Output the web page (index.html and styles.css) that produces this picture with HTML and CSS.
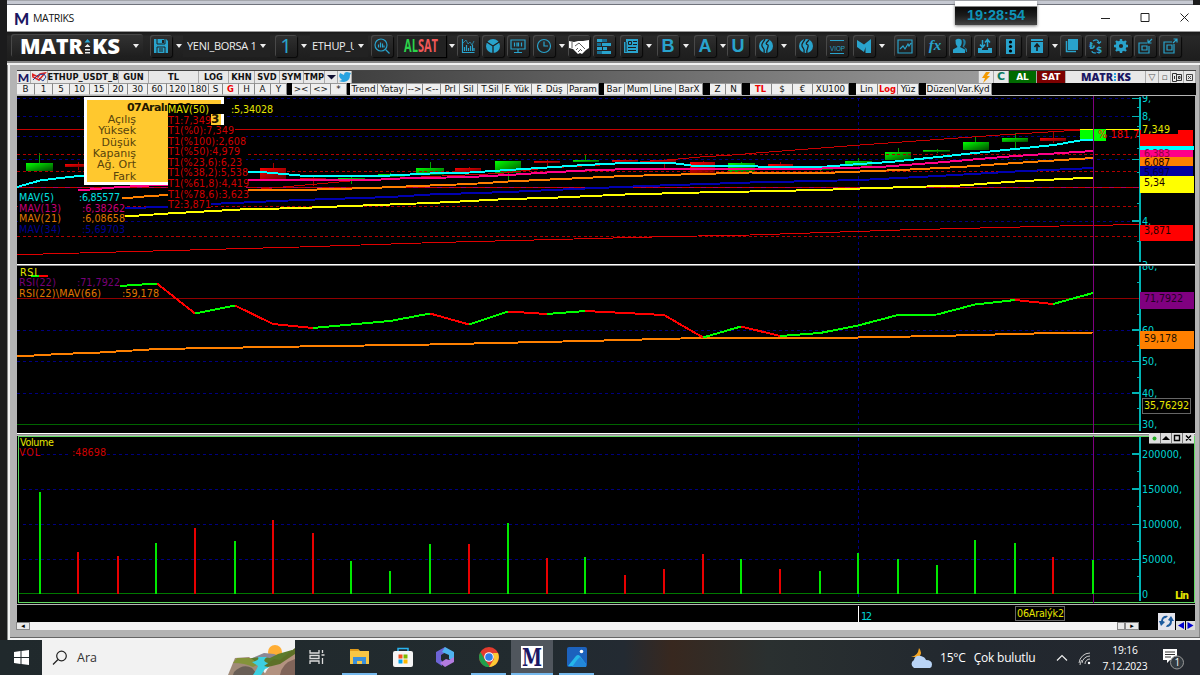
FILE: index.html
```html
<!DOCTYPE html>
<html lang="tr">
<head>
    <meta charset="UTF-8">
    <title>MATRIKS</title>
    <link rel="stylesheet" href="styles.css">
</head>
<body>
<div class="app">
    <div class="clock">19:28:54</div>
    <header class="titlebar">
        <span class="m-logo">M</span>
        <span class="title">MATRIKS</span>
        <svg class="win-btns" width="100" height="26" viewBox="0 0 100 26"><path d="M5 13.500h9M45 8.500h8v8h-8zM84.500 8.500l8 8M92.500 8.500l-8 8" fill="none" stroke="#222"/></svg>
    </header>

    <nav class="toolbar">
        <div class="tool brand">
            <svg width="106" height="22" viewBox="0 0 106 22"><text x="5" y="19" class="logo-text" textLength="63" lengthAdjust="spacingAndGlyphs">MATR</text><text x="77" y="19" class="logo-text" textLength="28" lengthAdjust="spacingAndGlyphs">KS</text><path d="M72.500 4l3 3.500h-6z" fill="#29a9d8"/><path d="M72.500 9l3 3h-6zM70 14h5v1.500h-5zM70 17h5v1.500h-5z" fill="#eee"/></svg>
            <i class="caret"></i>
        </div>
        <div class="tool"><svg class="btn" viewBox="0 0 22 22"><path d="M4 4h12l2 2v12h-14z" fill="#29a3cc"/><path d="M7 4v5h8v-5M7 18v-6h8v6M9 14h4M9 16h4" stroke="#202020" fill="none"/><path d="M12 5h2v3h-2z" fill="#202020"/></svg><i class="caret"></i></div>
        <div class="tool select"><span>YENI_BORSA 1.</span><i class="caret"></i></div>
        <div class="tool"><b class="btn letter thin">1</b><i class="caret"></i></div>
        <div class="tool select small"><span>ETHUP_U</span><i class="caret"></i></div>
        <div class="tool"><svg class="btn line" viewBox="0 0 22 22"><circle cx="10" cy="10" r="6"/><path d="M14.500 14.500l4 4M7.500 12.500v-3M9.500 12.500v-5M11.500 12.500v-4M13 12.500v-2"/></svg></div>
        <div class="tool alsat"><svg width="49" height="22" viewBox="0 0 49 22"><text x="7" y="17" textLength="34" lengthAdjust="spacingAndGlyphs"><tspan class="al">AL</tspan>SAT</text></svg><i class="caret"></i></div>
        <div class="tool"><svg class="btn line" viewBox="0 0 22 22"><path d="M5.500 4v13.500h12M7.500 16v-4M9.500 16v-6M11.500 16v-3M13.500 16v-5M15.500 16v-6M17 16v-3"/><path d="M6 8l3-3 2 4 2-2 2 3 2-4" stroke-width=".7"/></svg></div>
        <div class="tool"><svg class="btn" viewBox="0 0 22 22"><circle cx="11" cy="11" r="7" fill="#29a3cc"/><path d="M11 19v-8L4 6.500M11 11l7-4.500" stroke="#202020" stroke-width="1.300" fill="none"/></svg></div>
        <div class="tool"><svg class="btn line" viewBox="0 0 22 22"><path d="M4 5h14v9H4zM11 14v3M7 17.500h8M7.500 7.500v4M10 7.500v4M11.500 7.500v4M14.500 7.500v4"/></svg></div>
        <div class="tool"><svg class="btn line" viewBox="0 0 22 22"><circle cx="11" cy="11" r="6.500"/><path d="M11 6.500v4.500h4"/></svg><i class="caret"></i></div>
        <div class="tool"><svg class="btn" viewBox="0 0 22 22"><path d="M1 6l5 1 4-1 5 0 6-1v8l-3 2-4 4-2-1-2 1-5-5-4-1z" fill="#fff"/><path d="M7 11l4-3 6 6M8 15l2-2M10 17l2-2M14 16l-2-2M4 7v6" stroke="#333" stroke-width=".8" fill="none"/></svg></div>
        <div class="tool"><svg class="btn" viewBox="0 0 22 22"><path d="M4 4h10v3H4zM9 8h9v3H9zM4 12h5v3H4zM10 12h4v3h-4zM4 16h14v3H4z" fill="#29a3cc"/><path d="M9 4h5v3H9zM4 8h4v3H4zM4 16h5v3H4z" fill="#176d91"/></svg></div>
        <div class="tool"><svg class="btn" viewBox="0 0 22 22"><path d="M6 4h12v14H4V7h2z" fill="#29a3cc"/><path d="M6 7v10M8.500 6.500h3v3h-3zM13 6.500h4M13 9.500h4M8 12.500h8M8 15.500h8" stroke="#1c1c1c" fill="none"/></svg><i class="caret"></i></div>
        <div class="tool"><b class="btn letter">B</b><i class="caret"></i></div>
        <div class="tool"><b class="btn letter">A</b><i class="caret"></i></div>
        <div class="tool"><b class="btn letter">U</b></div>
        <div class="tool"><svg class="btn" viewBox="0 0 22 22"><circle cx="11" cy="11" r="7" fill="#29a3cc"/><path d="M10 4c-1 3-4 4-3 7s3 2 2 7M14 5c-3 3-4 4-1 5 1 2-2 4-1 8" stroke="#202020" stroke-width="1.300" fill="none"/></svg><i class="caret"></i></div>
        <div class="tool"><svg class="btn" viewBox="0 0 22 22"><circle cx="11" cy="11" r="7" fill="#29a3cc"/><path d="M10 4c-1 3-4 4-3 7s3 2 2 7M14 5c-3 3-4 4-1 5 1 2-2 4-1 8" stroke="#202020" stroke-width="1.300" fill="none"/></svg></div>
        <div class="tool"><svg class="btn line" viewBox="0 0 22 22"><path d="M4 5.500h14M4 18.500h14"/><text x="4" y="15.500" class="viop" textLength="15" lengthAdjust="spacingAndGlyphs">VIOP</text></svg></div>
        <div class="tool"><svg class="btn" viewBox="0 0 22 22"><path d="M4 5l7 4.500L18 4v14h-5.500v-6L11 17 4 12z" fill="#29a3cc"/></svg><i class="caret"></i></div>
        <div class="tool"><svg class="btn line" viewBox="0 0 22 22"><path d="M4 5h14v13H4zM6 14l3-3 2 3 3-5 1 2 2-3"/></svg></div>
        <div class="tool"><b class="btn fx">fx</b></div>
        <div class="tool"><svg class="btn" viewBox="0 0 22 22"><path d="M6.500 5q3-2.500 6 0 1 4-1.500 7l5 2.500V18H4v-3.500L8.500 12Q6 9 6.500 5" fill="#29a3cc"/><path d="M13.500 4q4 0 3 5l-1.500 3 3 2v3h-1l-1-3.500-2.500-2q2-4 0-7.500" fill="#1f7fa3"/></svg></div>
        <div class="tool"><svg class="btn" viewBox="0 0 22 22"><path d="M4 13h4v2h6v-2h4v5H4z" fill="#29a3cc"/><path d="M8.500 5v7M6 9.500l2.500 3 2.500-3M13.500 12V5M11 7.500l2.500-3 2.500 3" stroke="#29a3cc" stroke-width="1.500" fill="none"/></svg></div>
        <div class="tool"><svg class="btn" viewBox="0 0 22 22"><path d="M7 4h9v15H7z" fill="#29a3cc"/><circle cx="11.500" cy="7" r="1.600"/><circle cx="11.500" cy="11.500" r="1.600"/><circle cx="11.500" cy="16" r="1.600"/></svg></div>
        <div class="tool"><svg class="btn" viewBox="0 0 22 22"><path d="M5 4h12v2H5zM5 7h12v11H5z" fill="#29a3cc"/><path d="M11 16V9M8.500 12l2.500-3 2.500 3" stroke="#1c1c1c" stroke-width="1.600" fill="none"/></svg><i class="caret"></i></div>
        <div class="tool"><svg class="btn" viewBox="0 0 22 22"><path d="M8 4h10v11H8z" fill="#29a3cc"/><path d="M6.500 6v10.500H16" stroke="#29a3cc" stroke-width="1.500" fill="none"/></svg></div>
        <div class="tool"><svg class="btn line" viewBox="0 0 22 22"><path d="M8 6q5-3 6 2M12 7l2 1.500 2-2M11 18q-4 0-4-2"/><text x="4" y="14" class="money">₺</text><text x="11" y="18" class="money">$</text></svg></div>
        <div class="tool"><svg class="btn" viewBox="0 0 22 22"><circle cx="11" cy="11" r="3.800" fill="none" stroke="#29a3cc" stroke-width="3.400"/><path d="M11 4v3M11 15v3M4 11h3M15 11h3M6 6l2 2M14 14l2 2M16 6l-2 2M8 14l-2 2" stroke="#29a3cc" stroke-width="2.400"/></svg></div>
        <div class="tool"><svg class="btn line" viewBox="0 0 22 22"><path d="M13 8H5v10h10v-7M8 11h5v4H8zM18 4l-4 4M14 4.500v3.500h3.500"/></svg></div>
        <div class="tool"><svg class="btn line" viewBox="0 0 22 22"><path d="M13 7H5v11h10V9M8 10h5v5H8zM14 8l4-4M14.500 4H18v3.500"/></svg></div>
    </nav>

    <main class="frame">
        <div class="chart-title">
            <b class="navy">M</b>
            <span><svg width="15" height="10" viewBox="0 0 15 10"><path d="M0 2l6 3 2-3 5-1-6 7-6-3z" fill="none" stroke="#d22" stroke-width="1.500"/><path d="M1 8l5-5 6-1 2 3-3 4-4-3" fill="none" stroke="#249" /></svg></span>
            <span>ETHUP_USDT_B</span><span>GUN</span><span>TL</span><span>LOG</span><span>KHN</span><span>SVD</span><span>SYM</span><span>TMP</span>
            <span><svg width="9" height="6" viewBox="0 0 9 6"><path d="M0 1h9l-4.500 4.500z" fill="#113"/></svg></span>
            <span><svg width="12" height="10" viewBox="0 0 12 10"><path d="M1 1l4 2q0-3 3-3l4 1-1 2q0 6-6 7-3 0-5-1l3-1-2-2H1L0 4z" fill="#29a3e0"/></svg></span>
            <span class="fade"></span>
            <span><svg width="9" height="11" viewBox="0 0 9 11"><path d="M4 0h4L5 4h3L1 11l2-5H0z" fill="#f39a00"/></svg></span>
            <b class="teal">C</b>
            <b class="buy">AL</b><b class="sell">SAT</b>
            <span class="mini-brand"><svg width="52" height="10" viewBox="0 0 52 10"><text x="1" y="9" textLength="32" lengthAdjust="spacingAndGlyphs">MATR</text><text x="37" y="9" textLength="14" lengthAdjust="spacingAndGlyphs">KS</text><path d="M35 1v8" stroke="#29a3e0" stroke-width="2" stroke-dasharray="2 1"/></svg></span>
            <span class="mini">▽</span><span class="mini">▫</span>
            <span><svg width="10" height="9" viewBox="0 0 10 9"><path d="M.5.500h4v8h-4zM4.500 1.500h5v6h-5zM2.500 3v3M6.500 3.500h1.500v2h-1.500z" fill="none" stroke="#333"/></svg></span>
            <span><svg width="7" height="7" viewBox="0 0 7 7"><path d="M.5.500h6v6h-6zM2 2l3 3M5 2L2 5" fill="none" stroke="#444"/></svg></span>
        </div>
        <div class="periods">
            <span>B</span><span>1</span><span>5</span><span>10</span><span>15</span><span>20</span><span>30</span><span>60</span><span>120</span><span>180</span><span>S</span><span class="red">G</span><span>H</span><span>A</span><span>Y</span><i></i>
            <span>&gt;&lt;</span><span>&lt;&gt;</span><span>*</span><i></i>
            <span>Trend</span><span>Yatay</span><span>--&gt;</span><span>&lt;--</span><span>Prl</span><span>Sil</span><span>T.Sil</span><span>F. Yük</span><span>F. Düş</span><span>Param</span><i></i>
            <span>Bar</span><span>Mum</span><span>Line</span><span>BarX</span><i></i>
            <span>Z</span><span>N</span><i></i>
            <span class="red">TL</span><span>$</span><span>€</span><span>XU100</span><i></i>
            <span>Lin</span><span class="red">Log</span><span>Yüz</span><i></i>
            <span>Düzen</span><span>Var.Kyd</span>
        </div>

        <!-- price -->
        <svg class="pane" width="1178" height="168" viewBox="17 96 1178 168">
            <defs>
                <linearGradient id="up" x2="1" y2="1"><stop offset="0" stop-color="#00ff00"/><stop offset="1" stop-color="#004800"/></linearGradient>
                <linearGradient id="down" x2="1" y2="1"><stop offset="0" stop-color="#ff0000"/><stop offset="1" stop-color="#600000"/></linearGradient>
            </defs>
            <path class="grid" d="M17 98.500H1133M17 116.500H1133M17 136.500H1133M17 159.500H1133M17 221H1133M858.500 98V264"/>
            <path d="M17 129.500H1140M17 187.500H1140" stroke="#c80000"/>
            <path d="M17 187.500H1140" stroke="#b0005c" stroke-dasharray="5 7"/>
            <g class="wick-up"><path d="M39.500 153v12M351.500 177v7M390.500 173v3M430.500 162v12M508.500 161v19M585.500 154v8M741.500 162v11M820.500 168v4M858.500 158v8M898.500 148v8M937.500 149v4M975.500 137v6M1015.500 133v15M1093.500 130v14"/></g>
            <g class="wick-down"><path d="M78.500 162v8M273.500 163v8M313.500 177v9M469.500 167v5M547.500 160v7M625.500 159v4M664.500 159v9M703.500 161v4M780.500 162v5M1053.500 132v11"/></g>
            <g fill="url(#up)">
                <rect x="26" y="163" width="27" height="8"/><rect x="338" y="178" width="27" height="2"/><rect x="378" y="174" width="27" height="3"/><rect x="416" y="168" width="28" height="7"/><rect x="495" y="161" width="26" height="12"/><rect x="573" y="160" width="26" height="2"/><rect x="728" y="163" width="27" height="10"/><rect x="807" y="168" width="26" height="2"/><rect x="845" y="161" width="27" height="5"/><rect x="885" y="152" width="26" height="8"/><rect x="923" y="150" width="27" height="1.500"/><rect x="963" y="142" width="26" height="8"/><rect x="1002" y="138" width="26" height="4"/>
            </g>
            <rect x="1080" y="129" width="26" height="12" fill="#00ff00"/>
            <g fill="url(#down)">
                <rect x="65" y="164" width="26" height="3"/><rect x="260" y="168" width="26" height="11"/><rect x="300" y="178" width="26" height="2"/><rect x="455" y="168" width="26" height="4"/><rect x="534" y="161" width="26" height="2"/><rect x="612" y="160" width="26" height="2"/><rect x="650" y="160" width="26" height="2"/><rect x="690" y="162" width="25" height="11"/><rect x="768" y="164" width="25" height="6"/><rect x="1040" y="138" width="26" height="3"/>
            </g>
            <path class="fib" d="M17 154.500H1140M17 171.500H1140M17 206.500H1140M17 236.500H1140"/>
            <g class="thin">
                <path d="M17 255L25 254.500 300 247 437 242.500 672 236.500 750 235 900 230 1060 226 1140 224.500" stroke="#e00000"/>
                <path d="M250 190L300 185.500 350 181 430 176.500 500 173.500 547 168 600 165 667 160 700 157 740 154.500 750 153.500 860 145 1000 135 1080 130" stroke="#c80000"/>
            </g>
            <g class="ma">
                <path stroke="#00ffff" d="M17 187L40 180.500 60 178 84 175.500M248 172L262 172 300 175.500 390 175.500 430 173.500 470 172.500 508 170 547 167.500 585 165 625 163 672 163 695 166 820 167 860 164 890 162 938 157 975 153 1015 149 1054 145 1080 140.500 1093 140"/>
                <path stroke="#ff0088" d="M78 190.500L120 187 140 186 168 184.500M248 180.500L372 180 400 178.500 470 177 508 175 547 172.500 585 170.500 645 168.500 822 168.500 880 167 938 162.500 1015 156 1093 151"/>
                <path stroke="#ff8000" d="M122 198.500L150 196 168 195M248 190.500L300 190 370 188 430 185.500 470 184 508 181.500 625 176 700 174 750 172.500 822 173 860 171.500 900 170 960 167 1015 163 1093 158"/>
                <path stroke="#0000b0" d="M125 208.500L168 206.500 210 204 300 200 390 197 430 194.500 508 192 585 188.500 645 186 750 182.500 860 180 938 176 1015 171.500 1093 168"/>
                <path stroke="#ffff00" d="M125 216.500L168 213.500 240 209.500 300 208 350 206 430 203 470 201 508 199 547 198 625 194.500 700 192.500 750 191.500 820 190 860 188.500 960 185.500 1015 181.500 1093 177.500"/>
            </g>
            <path d="M1093.500 96V264" stroke="#800080"/>
            <path d="M1080 129.500h13M1106 129.500h34" stroke="#ffff00"/>
            <text x="1098" y="138" fill="#ff0000" textLength="41">% 181,7</text>

            <!-- data box, partly under the fibonacci labels -->
            <rect x="85.500" y="98.500" width="136.500" height="85" fill="#ffc82e" stroke="#fff" stroke-width="3"/>
            <g class="databox">
                <text x="127" y="111" class="date" textLength="65">07Aralık 20</text>
                <text x="136" y="122.500">Açılış</text><text x="136" y="134">Yüksek</text><text x="136" y="145.500">Düşük</text><text x="136" y="157">Kapanış</text><text x="136" y="168">Ağ. Ort</text><text x="136" y="179.500">Fark</text>
            </g>
            <path d="M168 104H230V114H168zM168 114H211V125H168zM168 125H235V135H168zM168 135H246V199H168zM168 199H211V210H168z"/>
            <text x="211" y="123" class="day">3</text>
            <g fill="#d00000">
                <text x="168" y="112.500" fill="#e6e600" textLength="41">MAV(50)</text><text x="231" y="112.500" fill="#e6e600" textLength="42">:5,34028</text>
                <text x="168" y="123.500" textLength="43">T1:7,349</text><text x="168" y="134" textLength="66">T1(%0):7,349</text><text x="168" y="144.500" textLength="78">T1(%100):2,608</text><text x="168" y="155" textLength="72">T1(%50):4,979</text><text x="168" y="165.500" textLength="74">T1(%23,6):6,23</text><text x="168" y="176" textLength="80">T1(%38,2):5,538</text><text x="168" y="186.500" textLength="81">T1(%61,8):4,419</text><text x="168" y="197.500" textLength="81">T1(%78,6):3,623</text><text x="168" y="208" textLength="43">T2:3,871</text>
            </g>
            <path d="M18 192H121V203H125V235H18z"/>
            <g>
                <text x="19" y="201" fill="#00e0e0" textLength="35">MAV(5)</text><text x="79" y="201" fill="#00e0e0" textLength="41">:6,85577</text>
                <text x="19" y="211.500" fill="#c80078" textLength="42">MAV(13)</text><text x="82" y="211.500" fill="#c80078" textLength="43">:6,38262</text>
                <text x="19" y="222" fill="#e07800" textLength="42">MAV(21)</text><text x="82" y="222" fill="#e07800" textLength="43">:6,08658</text>
                <text x="19" y="232.500" fill="#000090" textLength="42">MAV(34)</text><text x="82" y="232.500" fill="#000090" textLength="43">:5,69703</text>
            </g>

            <path class="axis" d="M1140 97V262M1132 98.500h8M1132 116.500h8M1137 107.500h3M1137 126.500h3M1137 136.500h3M1137 148.500h3M1132 159.500h8M1137 172.500h3M1137 203.500h3M1132 221h8M1137 241.500h3"/>
            <g class="cyan"><text x="1142" y="102">9,</text><text x="1142" y="120">8,</text><text x="1142" y="224.500">4,</text><text x="1142" y="269">3,</text></g>
            <path d="M1140 129.500h53v17h-53zM1140 225h53v16h-53z" fill="#ff0000"/>
            <path d="M1141 124h37v10h-37z"/>
            <path d="M1140 146h54v4h-54z" fill="#00ffff"/>
            <path d="M1140 150h53v7h-53z" fill="#ff0088"/>
            <path d="M1140 157h53v10h-53z" fill="#ff8000"/>
            <path d="M1140 166h53v10h-53z" fill="#0000a0"/>
            <path d="M1140 176h54v17h-54z" fill="#ffff00"/>
            <text x="1142" y="133" fill="#e6e600" textLength="28">7,349</text>
            <g fill="#1a0000"><text x="1144" y="166" textLength="26">6,087</text><text x="1144" y="186" textLength="21">5,34</text><text x="1144" y="234" textLength="27">3,871</text><text x="1144" y="175.500" textLength="26" fill="#000040">5,697</text></g>
            <text x="1144" y="157" textLength="26" fill="#900040">6,383</text>
        </svg>

        <!-- rsi -->
        <svg class="pane rsi" width="1178" height="167" viewBox="17 266 1178 167">
            <path class="grid" d="M17 330H1133M17 361.500H1133M17 393H1133M858.500 266V433"/>
            <path d="M17 298.500H1140" stroke="#900000"/>
            <path d="M17 424.500H1140" stroke="#006400"/>
            <g class="ma">
                <path stroke="#ff8000" d="M17 356.500L60 354 100 352.500 157 349 300 346.500 430 344.500 585 341 700 338 858 337.500 937 336 1015 334 1054 333 1093 332.500"/>
                <path stroke="#00ff00" d="M31 275.500L39 276M120 286L157 283.500M195 313.500L235 305.500M313 328L351 324.500 390 321 430 313.500M469 324.500L508 311.500M547 314L585 311M703 337.500L741 326.500M780 336L820 333 858 325.500 898 315 937 314.500 975 304.500 1015 300M1053 304L1093 293"/>
                <path stroke="#ff0000" d="M39 276L48 276.500M157 283.500L195 313.500M235 305.500L273 324 313 328M430 313.500L469 324.500M508 311.500L547 314M585 311L625 313 664 315 703 337.500M741 326.500L780 336M1015 300L1053 304"/>
            </g>
            <text x="20" y="276" fill="#e6e600" textLength="17">RSI</text>
            <g fill="#780078"><text x="19" y="285.500" textLength="37">RSI(22)</text><text x="77" y="285.500" textLength="43">:71,7922</text></g>
            <g fill="#e07800"><text x="19" y="296.500" textLength="82">RSI(22)\MAV(66)</text><text x="122" y="296.500" textLength="37">:59,178</text></g>
            <path d="M1093.500 266V433" stroke="#800080"/>
            <path class="axis" d="M1140 266V431M1137 282.500h3M1137 314.500h3M1132 330h8M1137 345.500h3M1132 361.500h8M1137 377.500h3M1132 393h8M1137 408.500h3"/>
            <g class="cyan"><text x="1142" y="270">80,</text><text x="1142" y="333.500">60,</text><text x="1142" y="365">50,</text><text x="1142" y="396.500">40,</text><text x="1142" y="428">30,</text></g>
            <path d="M1140 292h54v17h-54z" fill="#800080"/>
            <path d="M1140 331h54v18h-54z" fill="#ff8000"/>
            <path d="M1142.500 398.500h48v15h-48z" fill="#000" stroke="#666"/>
            <text x="1144" y="302" fill="#200020" textLength="39">71,7922</text><text x="1144" y="341.500" fill="#201000" textLength="33">59,178</text><text x="1144" y="409" fill="#e6e600" textLength="45">35,76292</text>
        </svg>

        <!-- volume -->
        <div class="volume">
            <svg class="pane" width="1178" height="168" viewBox="17 436 1178 168">
                <rect x="18.500" y="436.500" width="1176" height="166" fill="none" stroke="#60d860"/>
                <path class="grid" d="M23 454H1133M23 489H1133M23 524.500H1133M23 559.500H1133M858.500 438V601"/>
                <path d="M19 593.500H1140" stroke="#007800"/>
                <path d="M1093.500 436V603" stroke="#800080"/>
                <path class="bars" stroke="#00e800" d="M40 492V594M156 543V594M235 541V594M351 561V594M390 571V594M430 544V594M508 523V594M585 557V594M741 559V594M820 571V594M858 553V594M898 559V594M937 565V594M975 540V594M1015 543V594M1093 560V594"/>
                <path class="bars" stroke="#e80000" d="M78 552V594M118 556V594M195 528V594M273 520V594M313 533V594M469 544V594M547 558V594M625 575V594M664 569V594M703 554V594M780 569V594M1053 557V594"/>
                <path d="M70 447h37v9h-37z"/>
                <text x="20" y="445.500" fill="#e6e600" textLength="34">Volume</text>
                <g fill="#d00000"><text x="19" y="455.500" textLength="21">VOL</text><text x="72" y="455.500" textLength="34">:48698</text></g>
                <path class="axis" d="M1140 437V601M1132 454h8M1137 471.500h3M1132 489h8M1137 506.500h3M1132 524.500h8M1137 541.500h3M1132 559.500h8M1137 576.500h3"/>
                <g class="cyan"><text x="1142" y="457.500" textLength="40">200000,</text><text x="1142" y="492.500" textLength="40">150000,</text><text x="1142" y="528" textLength="40">100000,</text><text x="1142" y="563" textLength="34">50000,</text><text x="1142" y="597.500">0</text></g>
                <text x="1175" y="599" class="lin" textLength="14">Lin</text>
            </svg>
            <svg class="pane-btns" width="45" height="11" viewBox="0 0 45 11"><path d="M0 0h45v11H0z" fill="#ddd"/><path d="M11.500 0v11M22.500 0v11M33.500 0v11M0 10.500h45" stroke="#777"/><circle cx="5.500" cy="5.500" r="2" fill="#2a2"/><path d="M13 7l4-4 4 4z"/><path d="M25.500 2.500h5v5h-5zM37 2.500l5 5M42 2.500l-5 5" fill="none" stroke="#000" stroke-width="1.400"/></svg>
        </div>

        <div class="timeline">
            <svg class="pane" width="1178" height="17" viewBox="17 605 1178 17"><path d="M858.500 606V622" stroke="#fff"/><text x="861" y="620" class="month" textLength="11">12</text><path d="M1015.500 606.500h49v14h-49z" fill="none" stroke="#666"/><text x="1017" y="616.500" fill="#e6e600" textLength="47">06Aralýk2</text></svg>
        </div>
        <div class="scroll">
            <span class="sbtn">◂</span><span class="track"></span><span class="sbtn half"></span><span class="sbtn">▸</span>
            <svg class="nav" width="37" height="17" viewBox="0 0 37 17"><path d="M0 0h17v17H0z" fill="#e4e4ec"/><path d="M18 8h9v9h-9zM28 8h9v9h-9z" fill="#ddd"/><path d="M3 8q1-6 7-5l-2 2q-3 0-3 3l2 1-4 4-2-5zM14 8q0 6-6 6l1-2q3-1 3-4l-2-1 3-4 3 5z" fill="#1d5b9e"/><path d="M26 9v7l-6-3.500zM29.500 9v7l6-3.500z" fill="#0000d0"/></svg>
        </div>
    </main>

    <footer class="taskbar">
        <div class="start"><svg width="15" height="15" viewBox="0 0 15 15"><path d="M0 2l6.500-1v6H0zM7.500 1L15 0v7H7.500zM0 8h6.500v6L0 13zM7.500 8H15v7l-7.500-1z" fill="#fff"/></svg></div>
        <div class="search">
            <svg width="16" height="16" viewBox="0 0 16 16"><circle cx="9.500" cy="6" r="4.800" fill="none" stroke="#222" stroke-width="1.200"/><path d="M6 9.500L1 14.500" stroke="#222" stroke-width="1.300"/></svg>
            <span>Ara</span>
            <svg class="scene" width="67" height="30" viewBox="0 0 67 30">
                <circle cx="47" cy="7" r="7" fill="#ffae35"/>
                <path d="M22 14L36 8l10 1 10 4-6 6-25 2z" fill="#8b8794"/>
                <path d="M20 14q12-3 22-1l8-4 14-4 3 4-14 10-26 4z" fill="#5c7b2c"/>
                <path d="M0 30L7 13l14-1 10 8 7 10z" fill="#a08a78"/>
                <path d="M5 18l4-5 13 0 9 6-6 3q-8-4-20-4z" fill="#84933a"/>
                <path d="M6 27q9-9 18-4l6 7H5z" fill="#695e56"/>
                <path d="M30 12h9q-6 4 1 6t-3 6l-4 6h-8q4-6 5-9l-6-4q8-2 6-5z" fill="#3ccfe0"/>
                <path d="M36 30q7-14 18-15L67 5v25z" fill="#b39280"/>
                <path d="M36 21l10-7 6 1L67 3v6L52 19l-12 3z" fill="#5e7027"/>
                <path d="M52 30q2-12 15-16v16z" fill="#806459"/>
            </svg>
        </div>
        <div class="app-btn"><svg width="16" height="14" viewBox="0 0 16 14"><path d="M1 0v3h9V0M1 14v-3h9v3M1 5.500h9v3H1zM13.500 0v3M13.500 8v6M12.500 5h3" fill="none" stroke="#ddd" stroke-width="1.300"/></svg></div>
        <div class="app-btn open"><svg width="20" height="17" viewBox="0 0 20 17"><path d="M0 1h8l2 2h9v13H0z" fill="#f7c644"/><path d="M0 1h8l1 2H0z" fill="#e09a1a"/><path d="M3 9h13v7h-4v-3H7v3H3z" fill="#3b8fd8"/></svg></div>
        <div class="app-btn"><svg width="20" height="20" viewBox="0 0 20 20"><path d="M5 5V1.500h10V5" fill="none" stroke="#29b4f0" stroke-width="1.500"/><rect y="4" width="20" height="16" rx="2" fill="#f5f5f5"/><path d="M5.500 7.500h4v4h-4z" fill="#f25022"/><path d="M10.500 7.500h4v4h-4z" fill="#7fba00"/><path d="M5.500 12.500h4v4h-4z" fill="#00a4ef"/><path d="M10.500 12.500h4v4h-4z" fill="#ffb900"/></svg></div>
        <div class="app-btn"><svg width="19" height="20" viewBox="0 0 19 20"><path d="M9 0L0 5v10l6 4v-5l-1-1V8l5-3z" fill="#6d64d6"/><path d="M9 0l9 5v9l-5-2V8L6 5z" fill="#4fb3f0"/><path d="M18 10v5l-9 5-5-4 6-4 3 1z" fill="#b37be0"/></svg></div>
        <div class="app-btn open"><svg width="20" height="20" viewBox="0 0 20 20"><circle cx="10" cy="10" r="10" fill="#e33b2e"/><path d="M1.500 5l4.500 8 5 7A10 10 0 0 1 1.500 5z" fill="#1fa04c"/><path d="M19 6a10 10 0 0 1-9 14l5-8-1-6z" fill="#fcc934"/><circle cx="10" cy="10" r="4.800" fill="#fff"/><circle cx="10" cy="10" r="3.800" fill="#2f7de9"/></svg></div>
        <div class="app-btn open active"><svg class="big-m" width="22" height="22" viewBox="0 0 22 22"><text x="1" y="19.500" textLength="20" lengthAdjust="spacingAndGlyphs">M</text></svg></div>
        <div class="app-btn open"><svg width="20" height="20" viewBox="0 0 20 20"><rect width="20" height="20" rx="2" fill="#1c62bd"/><path d="M1 19L9 9q2-2 4 0l6 8v2z" fill="#25b7e8"/><path d="M10 13l3-3 6 7v3H5z" fill="#2387d8"/><circle cx="14.500" cy="4.500" r="1.800" fill="#fff"/></svg></div>
        <div class="weather"><svg width="22" height="20" viewBox="0 0 22 20"><path d="M9 0q4 5 0 9l-8 0q7-1 8-9z" fill="#f5a623"/><path d="M4 20a4.500 4.500 0 0 1 0-8q1-5 7-4 4 1 5 4 6 0 6 4.500T17 20z" fill="#b9d4f7"/></svg><span>15°C</span><span>Çok bulutlu</span></div>
        <svg class="tray" width="40" height="14" viewBox="0 0 40 14"><path d="M1 9.500l5-5 5 5" fill="none" stroke="#eee" stroke-width="1.200"/><path d="M23 12a11 11 0 0 1 11-10M26 12a8 8 0 0 1 8-7M29 13a5 5 0 0 1 5-5M24 14q0-3 2-5" fill="none" stroke="#ccc"/><circle cx="33" cy="12" r="1.200" fill="#fff"/></svg>
        <div class="datetime"><span>19:16</span><span>7.12.2023</span></div>
        <svg class="notify" width="24" height="24" viewBox="0 0 24 24"><path d="M1 3h14v11H8l-3 3v-3H1z" fill="#fff"/><path d="M3 6h10M3 8.500h10M3 11h6" stroke="#333"/><circle cx="15" cy="16.500" r="6.500" fill="#333a40" stroke="#999"/><text x="12.500" y="20">1</text></svg>
    </footer>
</div>
</body>
</html>
```
FILE: styles.css
```css
* {
    box-sizing: border-box;
}
body {
    margin: 0;
    background: #1b1b1c;
    font-family: "Open Sans", "Noto Sans", sans-serif;
}
.app {
    position: relative;
    width: 1200px;
    height: 675px;
    overflow: hidden;
    display: flex;
    flex-direction: column;
}
.app::before {
    content: "";
    height: 5px;
    flex: none;
    margin: 0 7px;
    background: linear-gradient(#a4a6ac 0 1px, #c6c9d2 1px 4px, #70737c 4px);
}
.titlebar {
    height: 27px;
    flex: none;
    margin-left: 7px;
    padding-left: 7px;
    background: #fff;
    display: flex;
    align-items: center;
    border-bottom: 1px solid #999;
}
.m-logo {
    width: 19px;
    font: 900 16px "Lato", sans-serif;
    color: #1b1763;
}
.title {
    font-size: 10.5px;
    letter-spacing: -.35px;
    color: #111;
}
.win-btns {
    margin-left: auto;
    margin-right: 4px;
}
.clock {
    position: absolute;
    z-index: 2;
    left: 955px;
    top: 1px;
    width: 82px;
    height: 24px;
    padding-top: 5px;
    text-align: center;
    font: bold 14.5px/19px "Liberation Sans", sans-serif;
    color: #0e94b8;
    background: linear-gradient(#fff 0 5px, #090909 6px, #1b1b1b 60%, #444);
    box-shadow: 0 1px 3px #777;
}

/* main toolbar */
.toolbar {
    height: 29px;
    flex: none;
    margin-left: 7px;
    padding: 2px 0 4px 4px;
    background: linear-gradient(#191919, #282828 15%, #1d1d1d);
    display: grid;
    grid-template-columns: 139px 33px 92px 35px 61px 26px 60px 25px 25px 26px 35px 25px 27px 37px 37px 33px 28px 40px 31px 27px 41px 30px 25px 25px 25px 27px 34px 25px 25px 24px 25px 33px;
}
.tool {
    display: flex;
    align-items: center;
}
.btn {
    width: 22px;
    height: 22px;
    flex: none;
    border-radius: 3px;
    background: linear-gradient(#303030, #1c1c1c);
    box-shadow: inset 1px 1px #484848, 1px 1px 1px #080808;
    text-align: center;
}
.line {
    fill: none;
    stroke: #29a3cc;
    stroke-width: 1.2;
}
.line text {
    fill: #29a3cc;
    stroke: none;
}
.viop {
    font: 8px "Liberation Sans", sans-serif;
}
.money {
    font: bold 9px "DejaVu Sans", sans-serif;
}
.letter {
    font: bold 18px/22px "Liberation Sans", sans-serif;
    color: #29a3cc;
}
.thin {
    font: 20px/22px "Noto Sans", sans-serif;
}
.fx {
    font: italic bold 15px/20px "Liberation Serif", serif;
    color: #29a3cc;
}
.caret {
    margin-left: 4px;
    border: 3px solid transparent;
    border-top: 4px solid #eee;
    border-bottom: 0;
}
.brand {
    width: 132px;
    background: linear-gradient(#333, #1e1e1e);
    box-shadow: inset 1px 1px #484848;
    border-radius: 3px;
    padding-left: 4px;
}
.brand .caret {
    margin-left: 12px;
}
.logo-text {
    font: 800 21px "Open Sans", sans-serif;
    fill: #fff;
}
.select {
    width: 87px;
    padding-left: 4px;
    background: #222;
    color: #eee;
    font-size: 11px;
    letter-spacing: -.3px;
    white-space: nowrap;
}
.select span {
    width: 69px;
    overflow: hidden;
}
.small {
    width: 58px;
    padding-left: 2px;
}
.small span {
    width: 42px;
}
.alsat svg {
    background: #222;
    box-shadow: inset 1px 1px #383838, 1px 1px 1px #000;
}
.alsat text {
    font: 700 17px "Open Sans", sans-serif;
    fill: #f05858;
}
.alsat .al {
    fill: #2bd34b;
}
.alsat .caret {
    margin-left: 3px;
}

/* chart window */
.frame {
    height: 579px;
    flex: none;
    margin-left: 7px;
    padding: 9px 0 0 10px;
    background: #b4b4b4;
    box-shadow: inset 0 2px #888, inset 0 4px #f2f2f2, inset 1px 0 #888, inset 3px 0 #f0f0f0, inset 0 -2px #f5f5f5, inset 0 -3px #666, inset -1px 0 #888;
}
.chart-title, .periods {
    width: 1179px;
    display: grid;
    font-family: "DejaVu Sans", sans-serif;
    white-space: nowrap;
}
.chart-title {
    height: 13px;
    border-top: 1px solid #444;
    font-weight: bold;
    font-size: 8.3px;
    line-height: 12px;
    grid-template-columns: 14px 17px 71px 30px 50px 30px 26px 25px 24px 21px 13px 14px 627px 15px 15px 28px 29px 80px 13px 12px 13px 12px;
}
.chart-title > * {
    display: flex;
    align-items: center;
    justify-content: center;
    overflow: hidden;
    color: #111;
    background: #e8e8e8;
    border-right: 1px solid #aaa;
}
.chart-title .navy {
    font: 900 12px/11px "Lato", sans-serif;
    color: #1b1763;
}
.chart-title .fade {
    background: linear-gradient(90deg, #404040, #999);
}
.chart-title .teal {
    color: #087a60;
    font-size: 11px;
}
.chart-title .buy {
    background: #006a00;
    color: #fff;
    font-size: 9px;
}
.chart-title .sell {
    background: #7c0000;
    color: #fff;
    font-size: 9px;
}
.mini-brand text {
    font: 800 10px "Open Sans", sans-serif;
    fill: #1b1763;
}
.chart-title .mini {
    font-size: 9px;
    color: #555;
}
.periods {
    height: 12px;
    margin-bottom: 1px;
    background: #000;
    font-size: 8.8px;
    line-height: 12px;
    grid-template-columns: 18px 18px 17px 20px 19px 19px 20px 19px 22px 20px 14px 16px 16px 16px 16px 5px 19px 20px 16px 3px 28px 29px 16px 18px 19px 18px 25px 29px 36px 31px 5px 21px 26px 25px 27px 7px 16px 16px 8px 22px 21px 20px 36px 7px 22px 20px 21px 7px 30px 36px;
}
.periods span {
    overflow: hidden;
    text-align: center;
    display: flex;
    justify-content: center;
    color: #111;
    background: #efefef;
    border-right: 1px solid #888;
    border-top: 1px solid #999;
    border-bottom: 1px solid #ccc;
    line-height: 11px;
}
.periods .red {
    color: #e00;
    font-weight: bold;
    font-size: 8.4px;
}
.pane {
    display: block;
    background: #000;
    font: 9.6px "DejaVu Sans", sans-serif;
    shape-rendering: crispEdges;
}
.periods + .pane, .rsi {
    margin-bottom: 2px;
    box-shadow: 0 1px #fff, 0 2px #888;
}
.rsi {
    margin-bottom: 3px;
}
.grid {
    fill: none;
    stroke: #000080;
    stroke-dasharray: 3 3;
}
.fib {
    fill: none;
    stroke: #b00000;
    stroke-dasharray: 3 2.5;
}
.wick-up {
    stroke: #00a000;
}
.wick-down {
    stroke: #a00000;
}
.ma, .thin {
    fill: none;
}
.ma {
    stroke-width: 2;
}
.bars {
    stroke-width: 2;
}
.axis {
    fill: none;
    stroke: #00b4b4;
    stroke-width: 1.5;
}
.cyan {
    fill: #00d4d4;
}
.databox {
    font-size: 11px;
    fill: #57430c;
    text-anchor: end;
}
.databox .date {
    font-weight: bold;
    fill: #221800;
    text-anchor: start;
}
.day {
    font-weight: bold;
    font-size: 12px;
    fill: #221800;
}
.lin {
    fill: #e6e600;
    font-weight: bold;
}
.month {
    fill: #00d4d4;
    font-size: 10px;
}
.volume {
    position: relative;
}
.pane-btns {
    position: absolute;
    right: 6px;
    top: -3px;
}
.timeline {
    padding-top: 1px;
}
.scroll {
    width: 1179px;
    height: 8px;
    display: flex;
    background: #000;
    margin-left: -1px;
}
.sbtn {
    width: 14px;
    background: #e8e8e8;
    border: 1px solid #888;
    font: 7px/6px "DejaVu Sans", sans-serif;
    text-align: center;
}
.half {
    width: 8px;
}
.track {
    width: 1087px;
    background: #f4f4f4;
}
.nav {
    margin-top: -9px;
    margin-left: 19px;
}

/* taskbar */
.taskbar {
    flex: 1;
    display: flex;
    align-items: center;
    background: linear-gradient(90deg, #20292c, #222b2f 45%, #232a32 52%, #38281f 56%, #2a3030 64%, #22282f 80%, #23272e);
    color: #fff;
}
.start {
    width: 42px;
    padding: 3px 0 0 14px;
}
.search {
    width: 253px;
    height: 35px;
    padding: 0 0 0 10px;
    display: flex;
    align-items: center;
    gap: 9px;
    color: #333;
    background: #f2f2f2;
    font-size: 12.5px;
}
.scene {
    margin-left: auto;
    align-self: flex-end;
}
.app-btn {
    width: 35px;
    height: 35px;
    margin-right: 8px;
    display: flex;
    align-items: center;
    justify-content: center;
    border-bottom: 2px solid transparent;
}
.search + .app-btn {
    margin-left: 4px;
}
.open {
    border-bottom-color: #76b9ed;
}
.active {
    width: 42px;
    margin: 0 6px 0 -3px;
    background: #50565d;
}
.big-m {
    background: #fff;
    font: bold 24px "DejaVu Serif", serif;
    fill: #1b1763;
}
.weather {
    margin-left: auto;
    width: 146px;
    display: flex;
    align-items: center;
    gap: 8px;
    font-size: 12px;
    letter-spacing: -.2px;
    white-space: nowrap;
}
.datetime {
    width: 58px;
    display: flex;
    flex-direction: column;
    align-items: center;
    font-size: 10.3px;
    line-height: 16px;
    letter-spacing: -.2px;
}
.notify {
    margin: 0 14px 0 8px;
}
.notify text {
    font: 10px "Open Sans", sans-serif;
    fill: #fff;
}
```
